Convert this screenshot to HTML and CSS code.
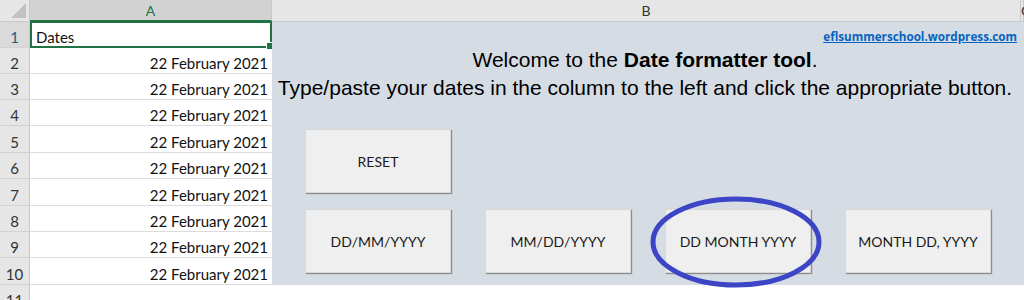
FILE: index.html
```html
<!DOCTYPE html>
<html lang="en">
  <head>
    <meta charset="UTF-8" />
    <title>Date formatter tool</title>
    <link rel="stylesheet" href="styles.css">
  </head>
  <body>
    <div class="sheet">
      <div class="corner"></div>
      <div class="col-head selected">A</div>
      <div class="col-head">B</div>
      <div class="col-head">C</div>

      <div class="row-head selected">1</div>
      <div class="cell active">Dates</div>
      <div class="row-head">2</div>
      <div class="cell num">22 February 2021</div>
      <div class="row-head">3</div>
      <div class="cell num">22 February 2021</div>
      <div class="row-head">4</div>
      <div class="cell num">22 February 2021</div>
      <div class="row-head">5</div>
      <div class="cell num">22 February 2021</div>
      <div class="row-head">6</div>
      <div class="cell num">22 February 2021</div>
      <div class="row-head">7</div>
      <div class="cell num">22 February 2021</div>
      <div class="row-head">8</div>
      <div class="cell num">22 February 2021</div>
      <div class="row-head">9</div>
      <div class="cell num">22 February 2021</div>
      <div class="row-head">10</div>
      <div class="cell num">22 February 2021</div>
      <div class="row-head">11</div>
      <div class="cell"></div>
      <div class="cell wide"></div>

      <div class="panel">
        <a class="site-link" href="#">eflsummerschool.wordpress.com</a>
        <p class="intro">Welcome to the <b>Date formatter tool</b>.</p>
        <p class="intro">Type/paste your dates in the column to the left and click the appropriate button.</p>
        <div class="buttons">
          <button class="btn">RESET</button>
        </div>
        <div class="buttons">
          <button class="btn">DD/MM/YYYY</button>
          <button class="btn">MM/DD/YYYY</button>
          <button class="btn">DD MONTH YYYY</button>
          <button class="btn">MONTH DD, YYYY</button>
        </div>
        <svg class="circle" width="174" height="94" viewBox="0 0 174 94">
          <ellipse cx="87" cy="47" rx="83" ry="43" fill="none" stroke="#3c45c6" stroke-width="5" />
        </svg>
      </div>
    </div>
  </body>
</html>
```

FILE: styles.css
```css
* {
  margin: 0;
  padding: 0;
  box-sizing: border-box;
}

body {
  background-color: #ffffff;
  font-family: 'Lato', 'Liberation Sans', sans-serif;
  color: #1a1a1a;
  overflow: hidden;
}

.sheet {
  display: grid;
  grid-template-columns: 30px 242px 749px minmax(0, 1fr);
  grid-template-rows: 22px 26px 26px 26px 26px 27px 26px 27px 26px 26px 27px 26px;
  width: 1024px;
  height: 300px;
  overflow: hidden;
}

.corner {
  position: relative;
  background-color: #e6e6e6;
  border-right: 1px solid #c8c8c8;
  border-bottom: 1px solid #c8c8c8;
}

.corner::after {
  content: '';
  position: absolute;
  right: 3px;
  bottom: 3px;
  border-left: 15px solid transparent;
  border-bottom: 15px solid #c2c2c2;
}

.col-head {
  background-color: #e6e6e6;
  border-right: 1px solid #c8c8c8;
  border-bottom: 1px solid #c8c8c8;
  font-size: 14px;
  line-height: 21px;
  text-align: center;
  color: #333333;
}

.col-head:last-of-type {
  text-align: left;
  padding-left: 1px;
}

.col-head.selected {
  background-color: #d2d2d2;
  color: #217346;
  border-bottom: 2px solid #217346;
}

.row-head {
  background-color: #e6e6e6;
  border-right: 1px solid #c8c8c8;
  border-bottom: 1px solid #d2d2d2;
  font-size: 15px;
  display: flex;
  align-items: flex-end;
  justify-content: center;
  padding-bottom: 1px;
  color: #333333;
}

.row-head.selected {
  background-color: #dadada;
  color: #1e5a8a;
}

.cell {
  border-bottom: 1px solid #dcdcdc;
  font-size: 15px;
  display: flex;
  align-items: flex-end;
  padding: 0 4px 1px;
  color: #111111;
}

.cell.num {
  justify-content: flex-end;
}

.cell.active {
  position: relative;
  border: 2px solid #217346;
  margin-top: -1px;
  padding-bottom: 0;
}

.cell.active::after {
  content: '';
  position: absolute;
  right: -4px;
  bottom: -4px;
  width: 6px;
  height: 6px;
  background-color: #217346;
  border: 1px solid #ffffff;
}

.cell.wide {
  grid-column: 3 / 5;
  border-bottom: none;
}

.panel {
  position: relative;
  grid-column: 3 / 5;
  grid-row: 2 / 12;
  background-color: #d6dce4;
  padding: 7px 0 0 33px;
  display: flex;
  flex-direction: column;
}

.site-link {
  align-self: flex-end;
  margin-right: 7px;
  font-family: 'Open Sans', sans-serif;
  font-size: 11.7px;
  font-weight: 700;
  line-height: 14px;
  color: #0563c1;
  text-decoration: underline;
}

.intro {
  margin-left: -33px;
  margin-right: 6px;
  font-family: 'Liberation Sans', Arial, sans-serif;
  font-size: 21px;
  line-height: 28px;
  text-align: center;
  color: #000000;
}

.intro:first-of-type {
  margin-top: 3px;
}

.buttons {
  display: flex;
  gap: 34px;
  margin-top: 16px;
}

.buttons:first-of-type {
  margin-top: 27px;
}

.btn {
  width: 146px;
  height: 64px;
  background-color: #efefef;
  border: 1px solid #d8d8d8;
  box-shadow: 1px 1px 1px #8c8c8c;
  font-family: 'Lato', sans-serif;
  font-size: 14px;
  color: #1a1a1a;
}

.circle {
  position: absolute;
  left: 377px;
  top: 173px;
}
```
